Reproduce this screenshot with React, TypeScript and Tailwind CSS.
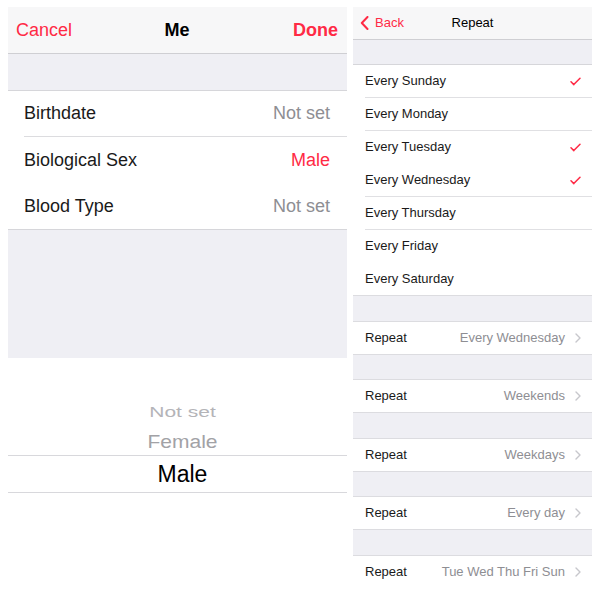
import React from "react";

const RED = "text-[#ff2a45]";

function Check() {
  return (
    <svg width="11" height="9" viewBox="0 0 11 9" fill="none">
      <path d="M1 4.8 L3.8 7.6 L10 1.2" stroke="#ff2a45" strokeWidth="1.5" strokeLinecap="round" strokeLinejoin="round" />
    </svg>
  );
}

function Chevron() {
  return (
    <svg width="6" height="10" viewBox="0 0 6 10" fill="none">
      <path d="M1 1 L5 5 L1 9" stroke="#c7c7cc" strokeWidth="1.4" strokeLinecap="round" strokeLinejoin="round" />
    </svg>
  );
}

function LeftPanel() {
  return (
    <div className="w-[339px] flex flex-col">
      <div className="h-[47px] bg-[#f7f7f8] border-b border-[#cfcfd3] grid grid-cols-[1fr_auto_1fr] items-center pl-[8px] pr-[9px]">
        <span className={`text-[18px] ${RED}`}>Cancel</span>
        <span className="text-[18px] font-bold text-black">Me</span>
        <span className={`text-[18px] font-bold ${RED} text-right`}>Done</span>
      </div>
      <div className="h-[37px] bg-[#efeff4] border-b border-[#d6d6da]" />
      <div className="bg-white">
        <div className="h-[45px] flex items-center justify-between pl-[16px] pr-[17px]">
          <span className="text-[18px] text-[#1a1a1a]">Birthdate</span>
          <span className="text-[18px] text-[#8e8e93]">Not set</span>
        </div>
        <div className="h-px ml-[16px] bg-[#dcdcdf]" />
        <div className="h-[46px] flex items-center justify-between pl-[16px] pr-[17px]">
          <span className="text-[18px] text-[#1a1a1a]">Biological Sex</span>
          <span className={`text-[18px] ${RED}`}>Male</span>
        </div>
        <div className="h-[46px] flex items-center justify-between pl-[16px] pr-[17px]">
          <span className="text-[18px] text-[#1a1a1a]">Blood Type</span>
          <span className="text-[18px] text-[#8e8e93]">Not set</span>
        </div>
      </div>
      <div className="h-[129px] bg-[#efeff4] border-t border-[#d6d6da]" />
      <div className="bg-white flex flex-col pt-[43px]">
        <div className="h-[20px] flex items-center justify-center pl-[10px]">
          <span className="text-[21px] leading-none text-[#b4b4b8] scale-y-[0.72] inline-block">Not set</span>
        </div>
        <div className="h-[26px] mt-[7px] flex items-center justify-center pl-[10px]">
          <span className="text-[21px] leading-none text-[#a2a2a6] scale-y-[0.88] inline-block">Female</span>
        </div>
        <div className="h-[38px] mt-px border-t border-b border-[#d8d8dc] flex items-center justify-center pl-[10px]">
          <span className="text-[23px] leading-none text-black">Male</span>
        </div>
      </div>
    </div>
  );
}

const days: [string, boolean, boolean][] = [
  ["Every Sunday", true, true],
  ["Every Monday", false, true],
  ["Every Tuesday", true, false],
  ["Every Wednesday", true, true],
  ["Every Thursday", false, true],
  ["Every Friday", false, false],
  ["Every Saturday", false, false],
];

const repeats = ["Every Wednesday", "Weekends", "Weekdays", "Every day", "Tue Wed Thu Fri Sun"];

function RightPanel() {
  return (
    <div className="w-[239px] flex flex-col">
      <div className="h-[33px] bg-[#f7f7f8] border-b border-[#cfcfd3] grid grid-cols-[1fr_auto_1fr] items-center">
        <div className="flex items-center pl-[7px] gap-[6px]">
          <svg width="9" height="14" viewBox="0 0 9 14" fill="none">
            <path d="M7.5 1 L1.8 7 L7.5 13" stroke="#ff2a45" strokeWidth="2" strokeLinecap="round" strokeLinejoin="round" />
          </svg>
          <span className={`text-[13px] ${RED}`}>Back</span>
        </div>
        <span className="text-[13px] text-black">Repeat</span>
        <div />
      </div>
      <div className="h-[25px] bg-[#efeff4] border-b border-[#d6d6da]" />
      <div className="bg-white">
        {days.map(([d, checked, sep], i) => (
          <div key={d}>
            <div className="h-[32px] flex items-center justify-between pl-[12px] pr-[11px]">
              <span className="text-[13px] text-[#1a1a1a]">{d}</span>
              {checked && <Check />}
            </div>
            {i < days.length - 1 && (
              <div className={`h-px ml-[12px] ${sep ? "bg-[#e0e0e3]" : "bg-white"}`} />
            )}
          </div>
        ))}
      </div>
      {repeats.map((r) => (
        <div key={r}>
          <div className="h-[26.5px] bg-[#efeff4] border-t border-b border-[#dcdce0]" />
          <div className="h-[32px] bg-white flex items-center justify-between pl-[12px] pr-[11px]">
            <span className="text-[13px] text-[#1a1a1a]">Repeat</span>
            <div className="flex items-center gap-[10px]">
              <span className="text-[13px] text-[#8e8e93]">{r}</span>
              <Chevron />
            </div>
          </div>
        </div>
      ))}
    </div>
  );
}

export default function App() {
  return (
    <div
      className="w-[600px] h-[594px] bg-white flex pt-[7px] pl-[8px] gap-[6px] overflow-hidden"
      style={{ fontFamily: '"Liberation Sans", Arial, sans-serif' }}
    >
      <LeftPanel />
      <RightPanel />
    </div>
  );
}
